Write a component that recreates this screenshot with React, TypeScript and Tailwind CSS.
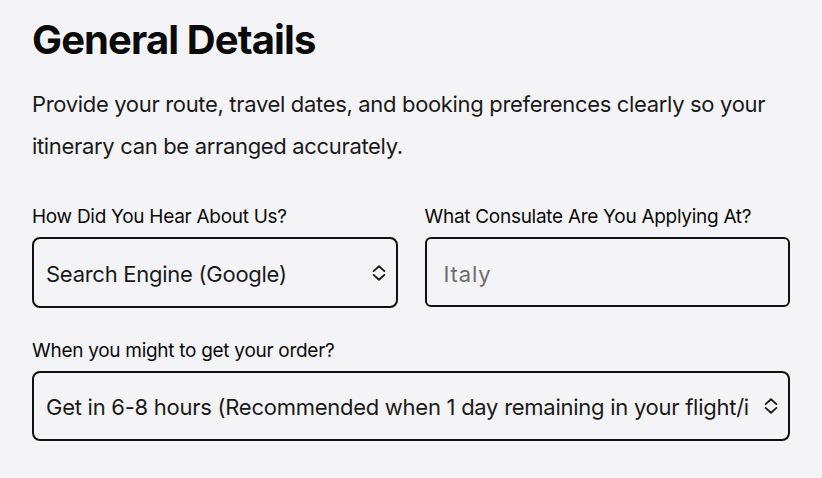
import { useState } from "react";

function Chevrons() {
  return (
    <svg
      width="14"
      height="17"
      viewBox="0 0 14 17"
      fill="none"
      stroke="#1a1a1a"
      strokeWidth="1.9"
      strokeLinecap="round"
      strokeLinejoin="round"
      className="pointer-events-none absolute right-[12px] top-1/2 -translate-y-1/2"
    >
      <path d="M1.6 6.6L7 1.7l5.4 4.9" />
      <path d="M1.6 10.4L7 15.3l5.4-4.9" />
    </svg>
  );
}

export default function App() {
  const [source, setSource] = useState("google");
  const [consulate, setConsulate] = useState("");
  const [speed, setSpeed] = useState("6-8");

  return (
    <div
      className="min-h-[478px] w-full bg-[#f4f4f6] px-[32px] pt-[16px] text-[#0a0a0a]"
      style={{ fontFamily: "Inter, 'Noto Sans', sans-serif" }}
    >
      <h1 className="text-[40px] font-bold leading-[48px] tracking-[-0.022em]">General Details</h1>
      <p className="mt-[19px] text-[22px] leading-[42px] tracking-[-0.015em] text-[#1a1a1a]">
        Provide your route, travel dates, and booking preferences clearly so your itinerary can be
        arranged accurately.
      </p>

      <div className="mt-[38px] grid grid-cols-2 gap-x-[27px]">
        <label className="flex flex-col">
          <span className="text-[19px] leading-[24px] tracking-[-0.015em]">How Did You Hear About Us?</span>
          <div className="relative mt-[8px]">
            <select
              value={source}
              onChange={(e) => setSource(e.target.value)}
              className="h-[71px] w-full appearance-none rounded-[8px] border-2 border-[#111] bg-transparent pl-[12px] pr-[36px] pt-[3px] text-[22px] tracking-[-0.012em] text-[#1a1a1a] outline-none"
            >
              <option value="google">Search Engine (Google)</option>
              <option value="social">Social Media</option>
              <option value="friend">Friend or Family</option>
            </select>
            <Chevrons />
          </div>
        </label>

        <label className="flex flex-col">
          <span className="text-[19px] leading-[24px] tracking-[-0.015em]">What Consulate Are You Applying At?</span>
          <input
            value={consulate}
            onChange={(e) => setConsulate(e.target.value)}
            placeholder="Italy"
            className="mt-[8px] h-[70px] w-full rounded-[6px] border-2 border-[#111] bg-transparent px-[17px] pt-[3px] text-[22px] tracking-[0.04em] text-[#1a1a1a] outline-none placeholder:text-[#6e6e6e]"
          />
        </label>
      </div>

      <label className="mt-[31px] flex flex-col">
        <span className="text-[19px] leading-[24px] tracking-[-0.015em]">When you might to get your order?</span>
        <div className="relative mt-[8px]">
          <select
            value={speed}
            onChange={(e) => setSpeed(e.target.value)}
            className="h-[70px] w-full appearance-none rounded-[8px] border-2 border-[#111] bg-transparent pl-[12px] pr-[40px] pt-[2px] text-[22px] tracking-[-0.012em] text-[#1a1a1a] outline-none"
          >
            <option value="6-8">Get in 6-8 hours (Recommended when 1 day remaining in your flight/interview)</option>
            <option value="24">Get in 24 hours</option>
            <option value="48">Get in 48 hours</option>
          </select>
          <Chevrons />
        </div>
      </label>
    </div>
  );
}
